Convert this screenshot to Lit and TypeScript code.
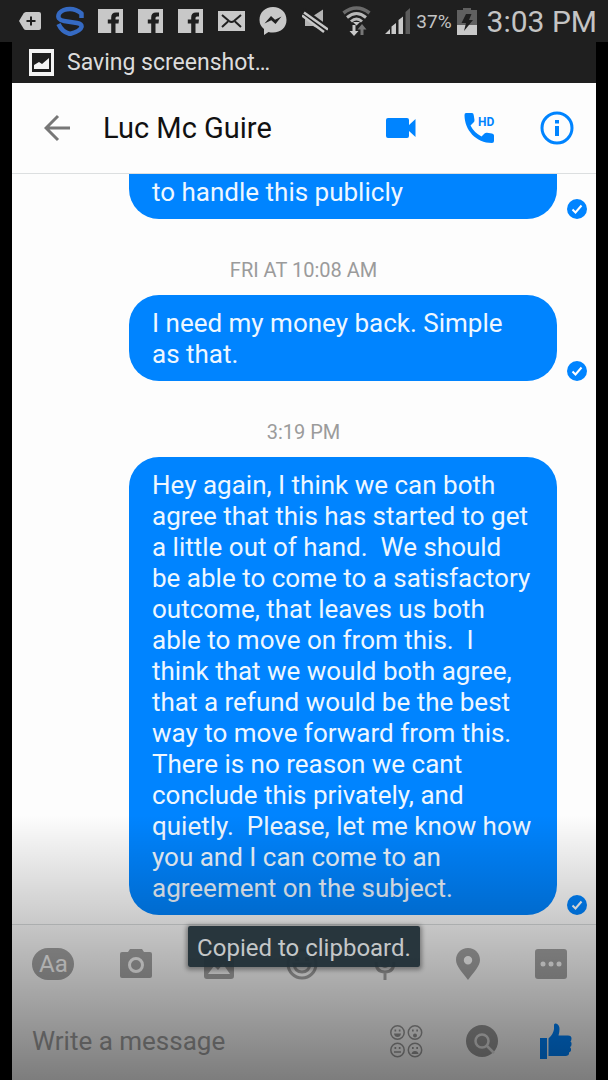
import { LitElement, html, css, svg } from "lit";
import { customElement } from "lit/decorators.js";

interface Message {
  stamp?: string;
  text: string;
  continued?: boolean;
}

const messages: Message[] = [
  { text: "to handle this publicly", continued: true },
  { stamp: "FRI AT 10:08 AM", text: "I need my money back. Simple as that." },
  {
    stamp: "3:19 PM",
    text:
      "Hey again, I think we can both agree that this has started to get a little out of hand.  We should be able to come to a satisfactory outcome, that leaves us both able to move on from this.  I think that we would both agree, that a refund would be the best way to move forward from this. There is no reason we cant conclude this privately, and quietly.  Please, let me know how you and I can come to an agreement on the subject.",
  },
];

const icon = (w: number, h: number, body: unknown) =>
  html`<svg class="icon" width=${w} height=${h} viewBox="0 0 ${w} ${h}" aria-hidden="true">${body}</svg>`;

const facebook = () =>
  icon(26, 26, svg`<path fill="#c8c8c8" d="M0 1H25V25H0Z"/><path fill="#1f1f1f" d="M13.200 25V15.500H9.800V11.500H13.200V9.500Q13.200 4.500 18 4.500H21V8.500H19Q17.500 8.500 17.500 10V11.500H21L20.500 15.500H17.500V25Z"/>`);

@customElement("status-bar")
export class StatusBar extends LitElement {
  static styles = css`
    :host { display: block; background: #1f1f1f; color: #c4c4c4; }
    .bar { display: flex; align-items: center; height: 42px; padding: 0 11px 0 19px; box-sizing: border-box; white-space: nowrap; }
    .icons { display: flex; align-items: center; gap: 14px; }
    .right { display: flex; align-items: center; margin-left: auto; }
    .icon { display: block; flex: none; }
    .percent { font-size: 19px; margin-right: 5px; }
    .time { font-size: 30px; margin-left: 10px; }
  `;
  render() {
    return html`<div class="bar">
      <div class="icons">
        ${icon(23, 20, svg`<path fill="#c8c8c8" d="M7 1H20Q22 1 22 3V17Q22 19 20 19H7Q5.500 19 4.500 17.500L0 10L4.500 2.500Q5.500 1 7 1Z"/><path stroke="#1f1f1f" stroke-width="2" d="M12 5.500V14.500M7.500 10H16.500"/>`)}
        ${icon(28, 30, svg`<path fill="none" stroke="#356ac3" stroke-width="4.500" stroke-linejoin="round" d="M25.500 12V7.500Q20 3 14 3Q7 3 3.500 7Q1.500 10 3 12.500Q4.500 14.500 8 15L21 17Q26 18 25.500 21Q24.500 25 14 28Q6 26 2.500 18"/>`)}
        ${facebook()}${facebook()}${facebook()}
        ${icon(27, 20, svg`<path fill="#c8c8c8" d="M0 0H27V20H0Z"/><path fill="none" stroke="#1f1f1f" stroke-width="2" d="M4 4L11 10Q13.500 12 16 10L23 4M4 16L10 10.500M23 16L17 10.500"/>`)}
        ${icon(29, 28, svg`<path fill="#c8c8c8" d="M14 0C22 0 27.500 5.500 27.500 13S22 25.500 14 25.500Q11.500 25.500 9.500 25L5 28V22Q.500 18.500 .500 13C.500 5.500 6 0 14 0Z"/><path fill="#1f1f1f" d="M5.500 16.500L12 9L16 12.800L22.500 9.500L16.500 17L12.300 13.200Z"/>`)}
        ${icon(26, 26, svg`<path fill="#b4b4b4" d="M3 8H11L21 1.500V23L11 18H3Z"/><path stroke="#1f1f1f" stroke-width="8" d="M0 3.500L26 22.500"/><path stroke="#c8c8c8" stroke-width="2.500" d="M2 4.500L26 21.500M0 7.500L22 24"/>`)}
        ${icon(29, 30, svg`<g fill="none"><path stroke="#6a6a6a" stroke-width="3.500" d="M1.500 7Q14.500 -3 27.500 7"/><path stroke="#b8b8b8" stroke-width="3" d="M5 11.500Q14.500 3.500 24 11.500M9 15.500Q14.500 10.500 20 15.500"/></g><path fill="#c8c8c8" d="M11 16H18L14.500 19.500ZM10.500 19H13.500V25H16.500L12 30L7.500 25H10.500Z"/><path fill="#777" d="M18.500 29V23.500H15.500L20 18L24.500 23.500H21.500V29Z"/>`)}
        ${icon(26, 27, svg`<path fill="#c8c8c8" d="M0 26L5 21V26ZM6.500 26V18.500L11 15V26ZM13.500 26V12L18 8.500V26Z"/><path fill="#5c5c5c" d="M20.500 26V4L25 0V26Z"/>`)}
      </div>
      <div class="right">
        <span class="percent">37%</span>
        ${icon(20, 27, svg`<path fill="#606060" d="M0 2H6V0H14V2H20V17H0Z"/><path fill="#c8c8c8" d="M0 17H20V27H0Z"/><path fill="#1f1f1f" d="M9 6H14.500L12 12H16L7 23L9 15H4.500Z"/>`)}
        <span class="time">3:03 PM</span>
      </div>
    </div>`;
  }
}

@customElement("chat-header")
export class ChatHeader extends LitElement {
  static styles = css`
    :host { display: block; }
    .bar { display: flex; align-items: center; height: 91px; padding-right: 0; box-sizing: border-box; border-bottom: 1px solid #dcdfe0; background: #fdfdfd; }
    button { display: flex; align-items: center; justify-content: center; border: 0; padding: 0; background: none; width: 78px; height: 64px; cursor: pointer; }
    .back { width: 91px; }
    h1 { flex: 1; min-width: 0; margin: 0; font-size: 29px; line-height: 36px; font-weight: 400; color: #111; white-space: nowrap; }
    .hd { font: 700 12px Roboto, sans-serif; fill: #0084ff; }
  `;
  render() {
    return html`<header class="bar">
      <button class="back" aria-label="Back">${icon(28, 28, svg`<path fill="none" stroke="#777" stroke-width="3" d="M26 14H2M14 2L2 14L14 26"/>`)}</button>
      <h1>Luc Mc Guire</h1>
      <button aria-label="Video call">${icon(30, 20, svg`<path fill="#0084ff" d="M2 0H21Q23 0 23 2V7L29.500 1V19L23 13V18Q23 20 21 20H2Q0 20 0 18V2Q0 0 2 0Z"/>`)}</button>
      <button aria-label="HD voice call">${icon(31, 30, svg`<path fill="#0084ff" d="M2 0H8Q9.500 0 9.700 2L10.500 7Q10.600 8.500 9.500 9.500L6.500 12.500Q10 19.500 17.500 23.500L20.500 20.500Q21.500 19.500 23 19.700L28 20.500Q30 20.800 30 22.500V28Q30 30 28 30C12 30 .500 17 .500 2Q.500 0 2 0Z"/><text class="hd" x="14" y="13">HD</text>`)}</button>
      <button aria-label="Conversation info">${icon(34, 34, svg`<circle cx="17" cy="17" r="15" fill="none" stroke="#0084ff" stroke-width="3"/><path fill="#0084ff" d="M15 9H19V12.500H15ZM15 15H19V25H15Z"/>`)}</button>
    </header>`;
  }
}

@customElement("message-list")
export class MessageList extends LitElement {
  static styles = css`
    :host { display: flex; flex-direction: column; justify-content: flex-end; flex: 1; min-height: 0; overflow: hidden; padding: 0 9px 9px 20px; box-sizing: border-box; background: #fdfdfd; }
    .stamp { flex: none; padding: 39px 0 13px; margin-right: 12px; font-size: 20px; line-height: 24px; text-align: center; color: #9b9b9b; }
    .row { display: flex; flex: none; align-items: flex-end; justify-content: flex-end; gap: 10px; }
    .bubble { width: 78%; max-width: 428px; box-sizing: border-box; margin: 0; padding: 13px 23px 11px; border-radius: 30px; background: #0084ff; color: #eef7ff; font-size: 26px; line-height: 31px; white-space: pre-wrap; }
    .continued { padding-top: 43px; }
    .icon { display: block; flex: none; }
  `;
  render() {
    return messages.map(
      (m) => html`
        ${m.stamp ? html`<div class="stamp">${m.stamp}</div>` : ""}
        <div class="row">
          <p class="bubble ${m.continued ? "continued" : ""}">${m.text}</p>
          ${icon(20, 20, svg`<circle cx="10" cy="10" r="10" fill="#0084ff"/><path fill="none" stroke="#fff" stroke-width="2" d="M5.500 10.500L8.500 13.500L14.500 6.500"/>`)}
        </div>`
    );
  }
}

const face = (x: number, y: number, mouth: unknown) =>
  svg`<g transform="translate(${x} ${y})"><circle cx="7.500" cy="7.500" r="6.700" fill="none" stroke="#9a9a9a" stroke-width="1.500"/><path fill="#9a9a9a" d="M4.500 4.500H6.200V6.500H4.500ZM8.800 4.500H10.500V6.500H8.800Z"/>${mouth}</g>`;

@customElement("message-composer")
export class MessageComposer extends LitElement {
  static styles = css`
    :host { display: block; border-top: 1px solid #d8dbdc; background: #fafafa; }
    button { display: flex; align-items: center; justify-content: center; border: 0; padding: 0; background: none; cursor: pointer; }
    .tools { display: grid; grid-template-columns: repeat(7, 1fr); padding-right: 4px; height: 77px; }
    .format { font: 400 24px/32px Roboto, sans-serif; width: 42px; border-radius: 16px; background: #a3a3a3; color: #f4f4f4; text-align: center; }
    .entry { display: flex; align-items: center; height: 78px; padding: 0 2px 0 20px; }
    input { flex: 1; min-width: 0; border: 0; outline: 0; padding: 0; background: none; font: 400 26px/32px Roboto, sans-serif; color: #333; }
    input::placeholder { color: #a0a0a0; opacity: 1; }
    .entry button { width: 75px; height: 64px; }
  `;
  render() {
    const g = "#a3a3a3";
    return html`
      <div class="tools">
        <button aria-label="Text"><span class="format">Aa</span></button>
        <button aria-label="Camera">${icon(32, 32, svg`<path fill=${g} fill-rule="evenodd" d="M2 4H8L10 1H22L24 4H30Q32 4 32 6V28Q32 30 30 30H2Q0 30 0 28V6Q0 4 2 4Z"/><circle cx="16" cy="17" r="6.500" fill="none" stroke="#f4f4f4" stroke-width="3"/>`)}</button>
        <button aria-label="Gallery">${icon(30, 30, svg`<path fill=${g} fill-rule="evenodd" d="M3 0H27Q30 0 30 3V27Q30 30 27 30H3Q0 30 0 27V3Q0 0 3 0ZM4 25H26L19 15L14 21L10 17Z"/>`)}</button>
        <button aria-label="Stickers">${icon(32, 32, svg`<circle cx="16" cy="16" r="14" fill="none" stroke=${g} stroke-width="3"/><path fill="none" stroke=${g} stroke-width="3" d="M8 16Q9 24 16 24T24 16Z"/><path fill=${g} d="M9 9H13V13H9ZM19 9H23V13H19Z"/>`)}</button>
        <button aria-label="Voice clip">${icon(24, 32, svg`<rect x="7" y="0" width="10" height="20" rx="5" fill=${g}/><path fill="none" stroke=${g} stroke-width="3" d="M3 14Q3 24 12 24T21 14M12 24V32"/>`)}</button>
        <button aria-label="Location">${icon(24, 32, svg`<path fill=${g} fill-rule="evenodd" d="M12 0C19 0 24 5 24 12C24 18 18 24 12 32C6 24 0 18 0 12C0 5 5 0 12 0ZM12 8A4.200 4.200 0 1 0 12 16.400A4.200 4.200 0 1 0 12 8Z"/>`)}</button>
        <button aria-label="More">${icon(32, 30, svg`<rect width="32" height="30" rx="3" fill=${g}/><g fill="#f4f4f4"><circle cx="8" cy="15" r="2.500"/><circle cx="16" cy="15" r="2.500"/><circle cx="24" cy="15" r="2.500"/></g>`)}</button>
      </div>
      <div class="entry">
        <input type="text" placeholder="Write a message" aria-label="Write a message" />
        <button aria-label="Emoji">${icon(33, 33, svg`
          ${face(0, 0, svg`<path fill="#9a9a9a" d="M4 8.500H11Q10.500 12 7.500 12T4 8.500Z"/>`)}
          ${face(17.5, 0, svg`<circle cx="7.500" cy="10.500" r="2" fill="#9a9a9a"/>`)}
          ${face(0, 17.5, svg`<path stroke="#9a9a9a" stroke-width="1.500" d="M4 9.500H11"/>`)}
          ${face(17.5, 17.5, svg`<path fill="#9a9a9a" d="M4 11.500Q4.500 8.500 7.500 8.500T11 11.500Z"/>`)}`)}</button>
        <button aria-label="Search">${icon(32, 32, svg`<circle cx="16" cy="16" r="16" fill="#989898"/><g fill="none" stroke="#e0e0e0" stroke-width="2.500"><circle cx="16" cy="16" r="6.500"/><path d="M20.500 20.500L28 28"/></g>`)}</button>
        <button aria-label="Like">${icon(33, 36, svg`<path fill="#0084ff" d="M0 15H7V36H0ZM8.500 15.500Q13.500 11 14 6V2Q14 0 16 .500Q19.500 1.500 19.500 6Q19.500 9 18.500 12.500H28Q31.500 12.500 31.500 15.500Q31.500 17.500 30.500 18.500Q32 19.500 31.500 21.500Q31.500 23.500 30 24Q31.500 25.500 31 27.500Q30.500 29 29 29.500Q29.500 32.500 26 33H8.500Z"/>`)}</button>
      </div>`;
  }
}

@customElement("app-root")
export class AppRoot extends LitElement {
  static styles = css`
    :host { display: flex; flex-direction: column; height: 100vh; background: #000; font-family: Roboto, sans-serif; }
    .screen { position: relative; display: flex; flex-direction: column; flex: 1; min-height: 0; margin: 0 12px; }
    .notice { display: flex; align-items: center; gap: 13px; height: 41px; flex: none; padding-left: 17px; background: #1f1f1f; color: #dcdcdc; font-size: 23px; line-height: 30px; box-sizing: border-box; }
    .icon { display: block; flex: none; }
    .shade { position: absolute; inset: auto 0 0 0; height: 265px; background: linear-gradient(rgba(0, 0, 0, 0), rgba(0, 0, 0, 0.5)); pointer-events: none; }
    .toast-layer { position: absolute; inset: auto 0 113px 0; display: flex; justify-content: center; pointer-events: none; }
    .toast { padding: 7px 9px 4px; border-radius: 2px; background: rgba(32, 46, 54, 0.95); box-shadow: 0 1px 4px 2px rgba(0, 0, 0, 0.35); color: #c4c7c8; font-size: 24px; line-height: 30px; white-space: nowrap; }
  `;
  render() {
    return html`
      <status-bar></status-bar>
      <main class="screen">
        <div class="notice">
          ${icon(25, 27, svg`<path fill="#f4f4f4" fill-rule="evenodd" d="M0 0H25V27H0ZM3 4V23H22V4Z"/><path fill="#f4f4f4" d="M5 20V16L10 13L13 15L20 9V20Z"/>`)}
          <span>Saving screenshot…</span>
        </div>
        <chat-header></chat-header>
        <message-list></message-list>
        <message-composer></message-composer>
        <div class="shade"></div>
        <div class="toast-layer"><div class="toast" role="status">Copied to clipboard.</div></div>
      </main>`;
  }
}
